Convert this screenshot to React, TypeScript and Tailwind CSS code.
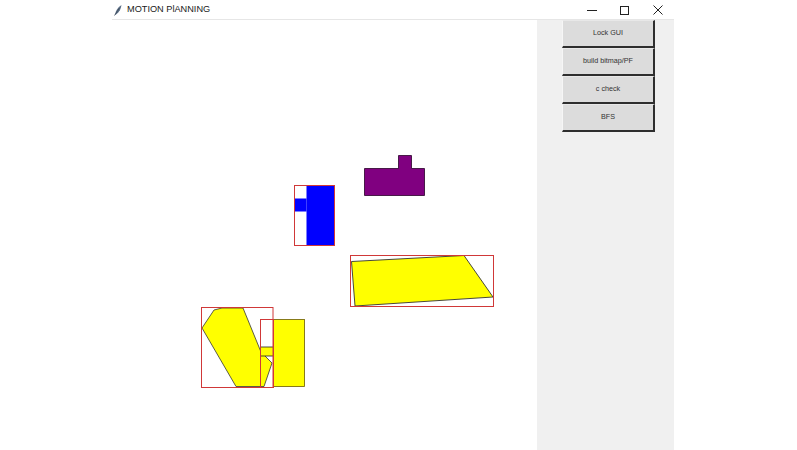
import React from "react";

const buttons = ["Lock GUI", "build bitmap/PF", "c check", "BFS"];

export default function App() {
  return (
    <div className="w-[797px] h-[450px] bg-white overflow-hidden" style={{ fontFamily: '"Liberation Sans", Arial, sans-serif' }}>
      <div className="ml-[112px] w-[567px] flex flex-col">
        {/* title bar */}
        <div className="h-[20px] flex items-center border-b border-[#e6e6e6] w-[562px] relative">
          <svg width="10" height="12" viewBox="0 0 10 12" className="ml-[1px] mr-[4px]">
            <path d="M2 11 C2.5 7 4.5 3.5 8.5 1 C8 4.5 6.5 8 3 10.5 Z" fill="#5b6f86" />
            <path d="M1.5 11.5 L6.5 4" stroke="#3d4a5a" strokeWidth="0.8" />
          </svg>
          <span className="text-[9.2px] text-[#1a1a1a]">MOTION PlANNING</span>
          <div className="absolute left-[463px] top-0 h-[20px] flex">
            <div className="w-[33px] h-[20px] flex items-center justify-center">
              <div className="w-[10px] h-[1px] bg-[#222]" />
            </div>
            <div className="w-[33px] h-[20px] flex items-center justify-center">
              <div className="w-[9px] h-[9px] border border-[#222]" />
            </div>
            <div className="w-[33px] h-[20px] flex items-center justify-center">
              <svg width="10" height="10" viewBox="0 0 10 10">
                <path d="M0.5 0.5 L9.5 9.5 M9.5 0.5 L0.5 9.5" stroke="#222" strokeWidth="1" />
              </svg>
            </div>
          </div>
        </div>
        {/* body */}
        <div className="flex w-[562px] h-[430px]">
          <div className="w-[425px] h-[430px] bg-white">
            <svg width="425" height="430" viewBox="112 20 425 430">
              {/* purple */}
              <path d="M364.5 168.5 H398.5 V155.5 H411.5 V168.5 H424.5 V195.5 H364.5 Z" fill="#800080" stroke="#2a002a" strokeWidth="0.8" />
              {/* blue */}
              <rect x="306.5" y="185.5" width="28" height="60" fill="#0000ff" />
              <rect x="294.5" y="198.5" width="12" height="13" fill="#0000ff" />
              <rect x="294.5" y="185.5" width="40" height="60" fill="none" stroke="#d03838" strokeWidth="1" />
              {/* yellow parallelogram */}
              <polygon points="351.5,261.5 464,255.5 493,297 355,306" fill="#ffff00" stroke="#333" strokeWidth="0.9" />
              <rect x="350.5" y="255.5" width="143" height="51" fill="none" stroke="#d03838" strokeWidth="1" />
              {/* bottom group */}
              <rect x="273.5" y="319.5" width="31" height="67" fill="#ffff00" stroke="#6a5a00" strokeWidth="0.8" />
              <polygon points="202,328 214,310 222,308 243,308 261,352 272,363 264,386.5 236,386.5" fill="#ffff00" stroke="#333" strokeWidth="0.8" />
              <rect x="260.5" y="319.5" width="13" height="27.5" fill="#ffffff" />
              <rect x="260.5" y="347" width="13" height="9" fill="#ffff00" stroke="#222" strokeWidth="0.8" />
              <rect x="201.5" y="307.5" width="71.5" height="80" fill="none" stroke="#d03838" strokeWidth="1" />
              <rect x="260.5" y="319.5" width="13" height="68" fill="none" stroke="#d03838" strokeWidth="1" />
            </svg>
          </div>
          <div className="w-[137px] h-[430px] bg-[#f0f0f0]">
            <div className="ml-[25px] w-[93px] flex flex-col">
              {buttons.map((b) => (
                <div
                  key={b}
                  className="h-[28px] flex items-center justify-center bg-[#dcdcdc] border-l border-[#f6f6f6] border-t border-t-[#e8e8e8] border-r-2 border-r-[#2e2e2e] border-b-2 border-b-[#2e2e2e] text-[7.2px] text-[#333]"
                >
                  {b}
                </div>
              ))}
            </div>
          </div>
        </div>
      </div>
    </div>
  );
}
